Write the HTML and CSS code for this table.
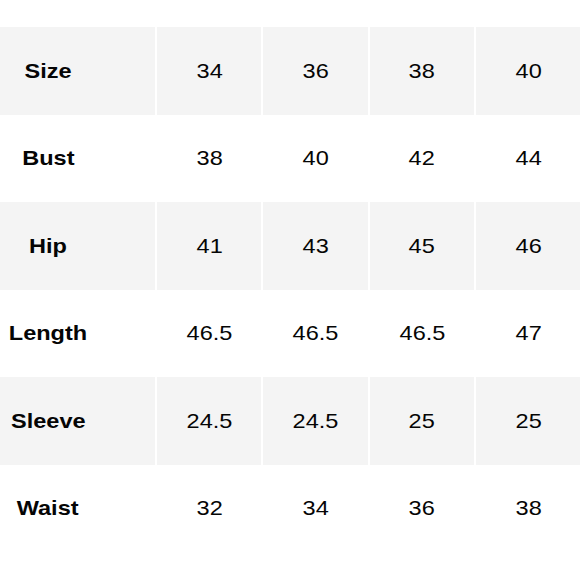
FILE: index.html
```html
<!DOCTYPE html>
<html>
<head>
<meta charset="utf-8">
<link rel="stylesheet" href="styles.css">
</head>
<body>
<div class="page">
  <div class="table">
    <div class="row shaded">
      <div class="cell label"><span>Size</span></div>
      <div class="cell"><span>34</span></div><div class="cell"><span>36</span></div><div class="cell"><span>38</span></div><div class="cell"><span>40</span></div>
    </div>
    <div class="row">
      <div class="cell label"><span>Bust</span></div>
      <div class="cell"><span>38</span></div><div class="cell"><span>40</span></div><div class="cell"><span>42</span></div><div class="cell"><span>44</span></div>
    </div>
    <div class="row shaded">
      <div class="cell label"><span>Hip</span></div>
      <div class="cell"><span>41</span></div><div class="cell"><span>43</span></div><div class="cell"><span>45</span></div><div class="cell"><span>46</span></div>
    </div>
    <div class="row">
      <div class="cell label"><span>Length</span></div>
      <div class="cell"><span>46.5</span></div><div class="cell"><span>46.5</span></div><div class="cell"><span>46.5</span></div><div class="cell"><span>47</span></div>
    </div>
    <div class="row shaded">
      <div class="cell label"><span>Sleeve</span></div>
      <div class="cell"><span>24.5</span></div><div class="cell"><span>24.5</span></div><div class="cell"><span>25</span></div><div class="cell"><span>25</span></div>
    </div>
    <div class="row">
      <div class="cell label"><span>Waist</span></div>
      <div class="cell"><span>32</span></div><div class="cell"><span>34</span></div><div class="cell"><span>36</span></div><div class="cell"><span>38</span></div>
    </div>
  </div>
</div>
</body>
</html>
```
FILE: styles.css
```css
html, body {
  margin: 0;
  padding: 0;
  background: #ffffff;
}
.page {
  width: 580px;
  height: 580px;
  padding-top: 27px;
  box-sizing: border-box;
  font-family: "Liberation Sans", Arial, sans-serif;
  color: #050505;
}
.table {
  display: flex;
  flex-direction: column;
}
.row {
  display: grid;
  grid-template-columns: 155px repeat(4, 1fr);
  column-gap: 2px;
  height: 87.5px;
}
.cell {
  display: flex;
  align-items: center;
  justify-content: center;
  font-size: 21px;
  padding-left: 1px;
}
.cell span {
  display: inline-block;
  transform: scaleX(1.12);
}
.shaded .cell {
  background: #f4f4f4;
}
.label {
  font-weight: bold;
  padding-right: 59px;
  padding-left: 0;
}
```
